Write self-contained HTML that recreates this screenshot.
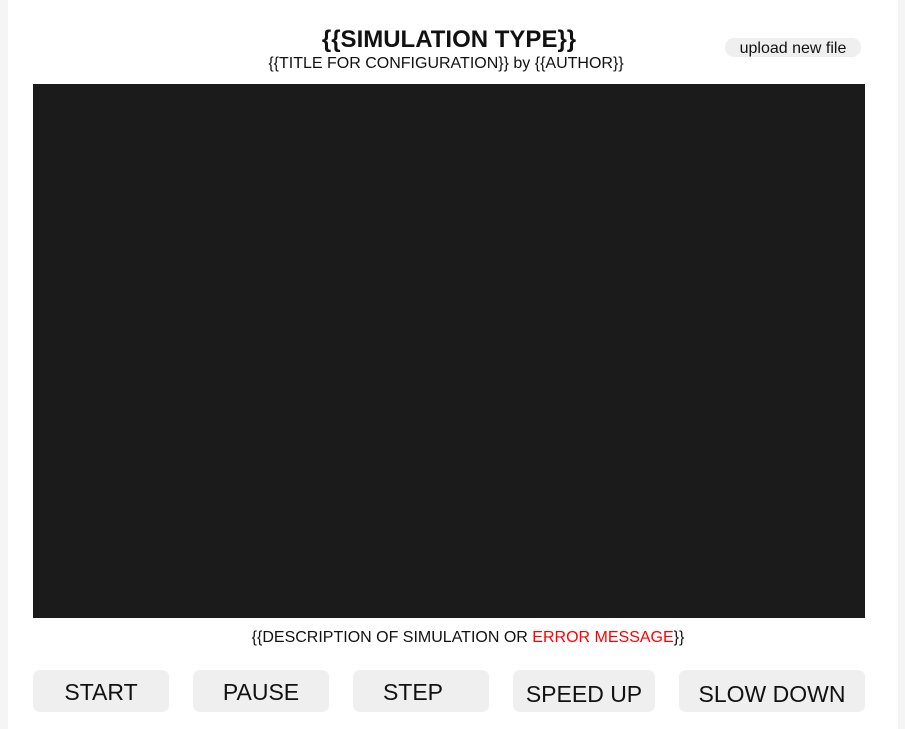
<!DOCTYPE html>
<html><head><style>
body{margin:0;width:905px;height:729px;background:#f5f5f5;font-family:"Liberation Sans",sans-serif;position:relative;overflow:hidden}
.main{position:absolute;left:8px;top:0;width:890px;height:729px;background:#fff}
.a{position:absolute;white-space:nowrap}
.btn{position:absolute;top:670px;height:42px;background:#efefef;border-radius:7px;font-size:23px;line-height:44px;text-align:center;color:#111}
</style></head><body>
<div class="main"></div>
<div class="a" style="left:0;width:898px;text-align:center;top:26px;font-size:24px;font-weight:bold;color:#111">{{SIMULATION TYPE}}</div>
<div class="a" style="left:0;width:892px;text-align:center;top:55px;font-size:16px;color:#111">{{TITLE FOR CONFIGURATION}} by {{AUTHOR}}</div>
<div class="a" style="left:725px;top:38px;width:136px;height:19px;background:#efefef;border-radius:9px;font-size:16px;line-height:21px;text-align:center;color:#111">upload new file</div>
<div class="a" style="left:33px;top:84px;width:832px;height:534px;background:#1b1b1b"></div>
<div class="a" style="left:0;width:936px;text-align:center;top:629px;font-size:16px;color:#111">{{DESCRIPTION OF SIMULATION OR <span style="color:#f00">ERROR MESSAGE</span>}}</div>
<div class="btn" style="left:33px;width:136px">START</div>
<div class="btn" style="left:193px;width:136px">PAUSE</div>
<div class="btn" style="left:353px;width:120px;padding-right:16px">STEP</div>
<div class="btn" style="left:513px;width:142px;line-height:48px">SPEED UP</div>
<div class="btn" style="left:679px;width:186px;line-height:48px">SLOW DOWN</div>
</body></html>
